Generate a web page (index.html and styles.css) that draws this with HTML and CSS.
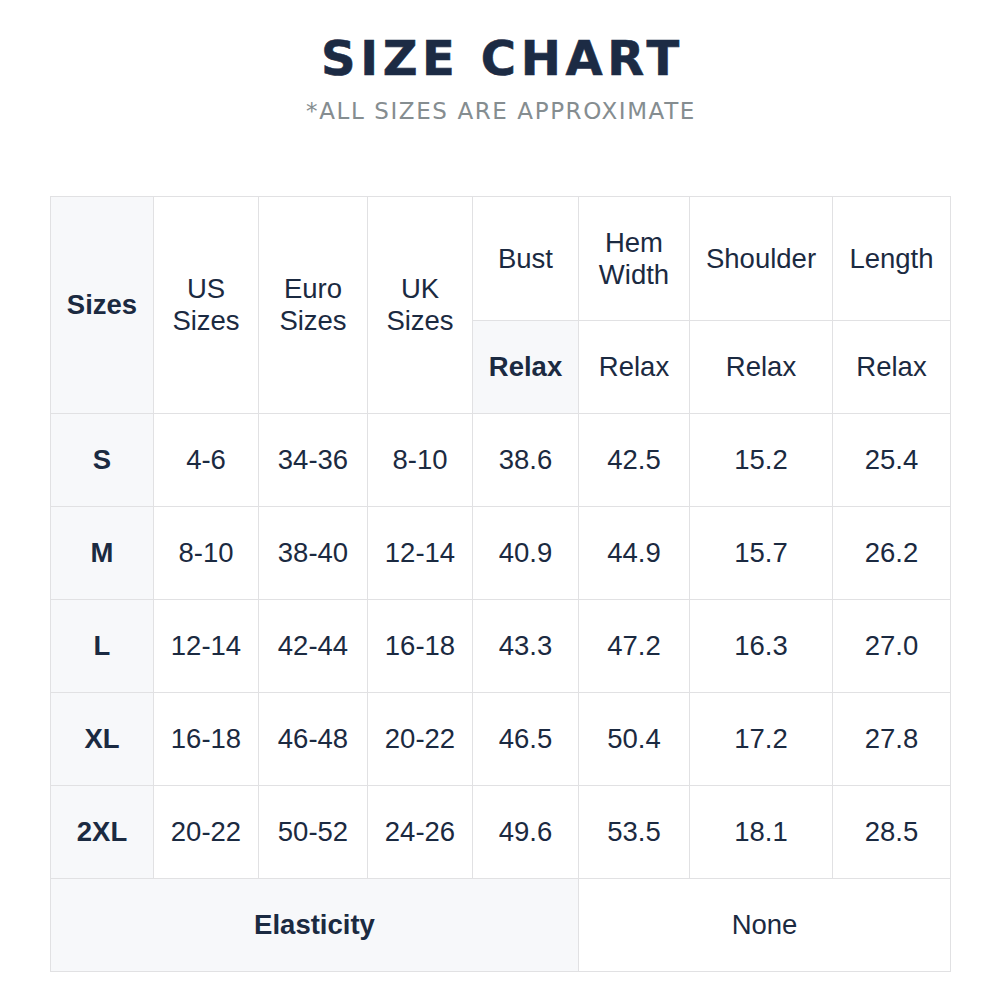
FILE: index.html
```html
<!DOCTYPE html>
<html>
<head>
<meta charset="utf-8">
<link rel="stylesheet" href="styles.css">
</head>
<body>
<header class="head">
  <h1 class="title">SIZE CHART</h1>
  <p class="subtitle">*ALL SIZES ARE APPROXIMATE</p>
</header>
<table class="chart">
  <colgroup>
    <col class="c1"><col class="c2"><col class="c3"><col class="c4"><col class="c5"><col class="c6"><col class="c7"><col class="c8">
  </colgroup>
  <tr class="h1row">
    <th rowspan="2" class="shade bold">Sizes</th>
    <th rowspan="2">US<br>Sizes</th>
    <th rowspan="2">Euro<br>Sizes</th>
    <th rowspan="2">UK<br>Sizes</th>
    <th>Bust</th>
    <th>Hem<br>Width</th>
    <th>Shoulder</th>
    <th>Length</th>
  </tr>
  <tr class="row">
    <th class="shade bold">Relax</th>
    <th>Relax</th>
    <th>Relax</th>
    <th>Relax</th>
  </tr>
  <tr class="row"><td class="shade bold">S</td><td>4-6</td><td>34-36</td><td>8-10</td><td>38.6</td><td>42.5</td><td>15.2</td><td>25.4</td></tr>
  <tr class="row"><td class="shade bold">M</td><td>8-10</td><td>38-40</td><td>12-14</td><td>40.9</td><td>44.9</td><td>15.7</td><td>26.2</td></tr>
  <tr class="row"><td class="shade bold">L</td><td>12-14</td><td>42-44</td><td>16-18</td><td>43.3</td><td>47.2</td><td>16.3</td><td>27.0</td></tr>
  <tr class="row"><td class="shade bold">XL</td><td>16-18</td><td>46-48</td><td>20-22</td><td>46.5</td><td>50.4</td><td>17.2</td><td>27.8</td></tr>
  <tr class="row"><td class="shade bold">2XL</td><td>20-22</td><td>50-52</td><td>24-26</td><td>49.6</td><td>53.5</td><td>18.1</td><td>28.5</td></tr>
  <tr class="row"><td colspan="5" class="shade bold">Elasticity</td><td colspan="3">None</td></tr>
</table>
</body>
</html>
```
FILE: styles.css
```css
html, body {
  margin: 0;
  padding: 0;
  background: #ffffff;
}
.head {
  text-align: center;
  padding-top: 28px;
}
.title {
  margin: 0;
  font-family: "DejaVu Sans", "Liberation Sans", sans-serif;
  font-weight: 700;
  font-size: 48px;
  line-height: 60px;
  letter-spacing: 4.6px;
  color: #1c2b44;
  padding-left: 5px;
  -webkit-text-stroke: 0.6px #1c2b44;
}
.subtitle {
  margin: 8px 0 0 0;
  font-family: "DejaVu Sans", "Liberation Sans", sans-serif;
  font-weight: 400;
  font-size: 23px;
  line-height: 30px;
  letter-spacing: 1.6px;
  color: #858d90;
  padding-left: 2px;
}
.chart {
  margin: 70px 0 0 50px;
  width: 900px;
  border-collapse: collapse;
  table-layout: fixed;
  font-family: "Liberation Sans", Arial, sans-serif;
  font-size: 27.5px;
  color: #1b2a41;
}
.c1 { width: 103px; }
.c2 { width: 105px; }
.c3 { width: 109px; }
.c4 { width: 105px; }
.c5 { width: 106px; }
.c6 { width: 111px; }
.c7 { width: 143px; }
.c8 { width: 118px; }
.chart th, .chart td {
  border: 1px solid #e1e1e3;
  text-align: center;
  vertical-align: middle;
  font-weight: 400;
  padding: 0;
  line-height: 32px;
}
.h1row { height: 124px; }
.row { height: 93px; }
.shade { background: #f7f8fa; }
.chart .bold { font-weight: 700; }
```
